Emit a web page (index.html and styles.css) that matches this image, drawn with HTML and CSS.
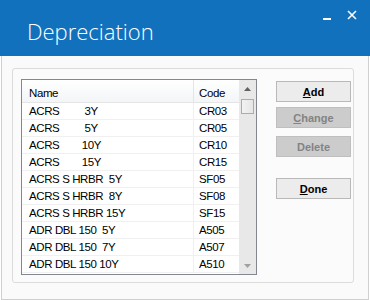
FILE: index.html
```html
<!DOCTYPE html>
<html lang="en">
<head>
    <meta charset="UTF-8">
    <title>Depreciation</title>
    <link rel="stylesheet" href="styles.css">
</head>
<body>
    <div class="window">
        <div class="titlebar">
            <h1 class="title">Depreciation</h1>
            <div class="controls">
                <svg class="min" width="8" height="2" viewBox="0 0 8 2"><rect width="8" height="2" fill="#fff"/></svg>
                <svg class="close" width="10" height="10" viewBox="0 0 10 10"><path d="M1 1 L9 9 M9 1 L1 9" stroke="#fff" stroke-width="1.6"/></svg>
            </div>
        </div>
        <div class="content">
            <div class="groupbox">
                <div class="listview">
                    <div class="grid">
                        <div class="head name">Name</div>
                        <div class="head code">Code</div>
                        <div class="cell name">ACRS         3Y</div><div class="cell code">CR03</div>
                        <div class="cell name">ACRS         5Y</div><div class="cell code">CR05</div>
                        <div class="cell name">ACRS        10Y</div><div class="cell code">CR10</div>
                        <div class="cell name">ACRS        15Y</div><div class="cell code">CR15</div>
                        <div class="cell name">ACRS S HRBR  5Y</div><div class="cell code">SF05</div>
                        <div class="cell name">ACRS S HRBR  8Y</div><div class="cell code">SF08</div>
                        <div class="cell name">ACRS S HRBR 15Y</div><div class="cell code">SF15</div>
                        <div class="cell name">ADR DBL 150  5Y</div><div class="cell code">A505</div>
                        <div class="cell name">ADR DBL 150  7Y</div><div class="cell code">A507</div>
                        <div class="cell name">ADR DBL 150 10Y</div><div class="cell code">A510</div>
                    </div>
                    <div class="scrollbar">
                        <div class="arrow"><svg width="7" height="4" viewBox="0 0 7 4"><path d="M0 4 L3.5 0 L7 4 Z" fill="#606060"/></svg></div>
                        <div class="thumb"></div>
                        <div class="track"></div>
                        <div class="arrow"><svg width="7" height="4" viewBox="0 0 7 4"><path d="M0 0 L7 0 L3.5 4 Z" fill="#a0a0a0"/></svg></div>
                    </div>
                </div>
                <div class="buttons">
                    <button class="btn"><u>A</u>dd</button>
                    <button class="btn btn-change" disabled><u>C</u>hange</button>
                    <button class="btn btn-delete" disabled>Delete</button>
                    <button class="btn btn-done"><u>D</u>one</button>
                </div>
            </div>
        </div>
    </div>
</body>
</html>
```

FILE: styles.css
```css
body {
    margin: 0;
    font-family: "Liberation Sans", Arial, sans-serif;
    background: #ffffff;
}
.window {
    width: 370px;
    height: 300px;
}
.titlebar {
    height: 56px;
    background: #1171bd;
    display: flex;
    justify-content: space-between;
}
.title {
    margin: 0;
    padding: 16px 0 0 27px;
    font-family: "Open Sans", sans-serif;
    font-weight: 300;
    font-size: 22px;
    color: #ffffff;
    line-height: 30px;
}
.controls {
    display: flex;
    align-items: flex-start;
}
.min {
    margin: 18px 16px 0 0;
}
.close {
    margin: 10px 13px 0 0;
}
.content {
    margin: 0 1px 1px 1px;
    height: 231px;
    border: 1px solid #cfcfcf;
    border-top: none;
    background: #fafafa;
    padding: 12px 0 0 10px;
}
.groupbox {
    width: 332px;
    height: 203px;
    border: 1px solid #dcdcdc;
    border-radius: 3px;
    background: #fbfbfb;
    padding: 10px 0 0 8px;
    display: flex;
    align-items: flex-start;
}
.listview {
    width: 234px;
    height: 194px;
    border: 1px solid #828790;
    background: #ffffff;
    display: flex;
    font-size: 11.5px;
    letter-spacing: -0.4px;
    color: #000000;
}
.grid {
    display: grid;
    grid-template-columns: 172px 45px;
    grid-auto-rows: 17px;
    grid-template-rows: 23px;
    align-content: start;
}
.head {
    background: linear-gradient(#ffffff, #f4f5f7);
    border-bottom: 1px solid #e5e5e5;
    line-height: 26px;
}
.head.name {
    border-right: 1px solid #e5e5e5;
}
.cell {
    line-height: 17px;
    border-bottom: 1px solid #f0f0f0;
    white-space: pre;
    box-sizing: border-box;
    height: 17px;
}
.cell.name {
    border-right: 1px solid #f0f0f0;
}
.name {
    padding-left: 7px;
    box-sizing: border-box;
}
.code {
    padding-left: 5px;
    box-sizing: border-box;
}
.scrollbar {
    width: 17px;
    background: #e8e8e8;
    display: flex;
    flex-direction: column;
    align-items: center;
}
.arrow {
    height: 17px;
    width: 17px;
    display: flex;
    align-items: center;
    justify-content: center;
}
.thumb {
    margin-top: 2px;
    width: 13px;
    height: 15px;
    border: 1px solid #acacac;
    background: linear-gradient(90deg, #f2f2f2, #e6e6e6);
    box-sizing: border-box;
}
.track {
    flex: 1;
}
.buttons {
    margin-left: 19px;
    margin-top: 2px;
    display: flex;
    flex-direction: column;
}
.btn {
    width: 75px;
    height: 21px;
    padding: 0;
    font-family: "Liberation Sans", Arial, sans-serif;
    font-size: 11px;
    font-weight: bold;
    color: #000000;
    background: #ececec;
    border: 1px solid #b9b9b9;
    border-radius: 0;
}
.btn:disabled {
    color: #838383;
    background: #cccccc;
    border-color: #bfbfbf;
}
.btn-change {
    margin-top: 5px;
}
.btn-delete {
    margin-top: 8px;
}
.btn-done {
    margin-top: 21px;
}
```
